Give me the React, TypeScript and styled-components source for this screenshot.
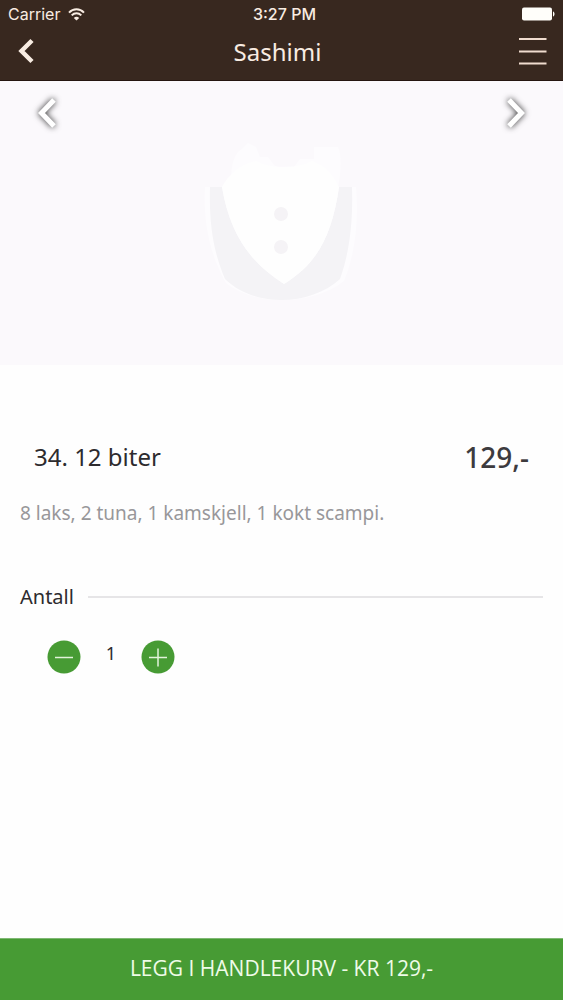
import React, { useState } from "react";
import styled, { createGlobalStyle } from "styled-components";

const GlobalStyle = createGlobalStyle`
  *, *::before, *::after { box-sizing: border-box; }
  body {
    margin: 0;
    background: #fefefe;
    font-family: "Noto Sans", "Open Sans", sans-serif;
    color: #2d2b2e;
  }
  button { font: inherit; color: inherit; border: 0; padding: 0; background: none; cursor: pointer; }
  h1, h2, p { margin: 0; font-weight: 400; }
  svg { display: block; }
`;

const Screen = styled.div`
  display: flex;
  flex-direction: column;
  min-height: 100vh;
`;

const Header = styled.header`
  background: #38281f;
  color: #f8ece2;
  border-bottom: 1px solid #251610;
`;

const StatusBar = styled.div`
  display: grid;
  grid-template-columns: 1fr auto 1fr;
  align-items: center;
  height: 28px;
  padding: 0 8px;
  font-family: Inter, "Liberation Sans", sans-serif;
  font-size: 16px;
  line-height: 28px;
`;

const Carrier = styled.div`
  display: flex;
  align-items: center;
  gap: 8px;
`;

const Clock = styled.time`
  padding-left: 6px;
  font-weight: 500;
`;

const BatterySlot = styled.div`
  justify-self: end;
`;

const NavBar = styled.nav`
  display: grid;
  grid-template-columns: 1fr auto 1fr;
  align-items: center;
  height: 52px;
  padding: 0 16px 6px;
`;

const NavTitle = styled.h1`
  padding: 2px 8px 0 0;
  font-size: 24px;
  line-height: 44px;
`;

const NavButton = styled.button<{ $side: "start" | "end" }>`
  justify-self: ${(p) => p.$side};
`;

const Hero = styled.section`
  display: flex;
  justify-content: space-between;
  align-items: flex-start;
  height: 284px;
  padding: 12px 28px;
  background: #fbf9fc;
`;

const ArrowButton = styled.button`
  filter: drop-shadow(0 0 3px rgba(0, 0, 0, 0.85));
`;

const Emblem = styled.svg`
  margin-top: 46px;
`;

const Details = styled.main`
  flex: 1;
  padding: 72px 20px 24px;
`;

const ItemRow = styled.div`
  display: flex;
  justify-content: space-between;
  align-items: center;
  padding: 0 14px;
  line-height: 40px;
`;

const ItemName = styled.h2`
  font-size: 24px;
`;

const Price = styled.p`
  font-size: 28px;
  font-weight: 500;
  color: #3d3b3e;
`;

const Description = styled.p`
  margin-top: 20px;
  font-size: 19px;
  line-height: 32px;
  color: #98979a;
`;

const Quantity = styled.fieldset`
  min-width: 0;
  margin: 54px 0 0;
  padding: 0;
  border: 0;
`;

const QuantityHeading = styled.div`
  display: flex;
  align-items: center;
  gap: 14px;
  font-size: 20px;
  line-height: 28px;

  &::after {
    content: "";
    flex: 1;
    height: 2px;
    background: #e6e5e7;
  }
`;

const Stepper = styled.div`
  display: flex;
  align-items: center;
  margin-top: 28px;
  padding-left: 26px;
`;

const StepButton = styled.button`
  width: 36px;
  height: 36px;
`;

const Count = styled.output`
  width: 58px;
  padding-bottom: 8px;
  text-align: center;
  font-size: 18px;
  line-height: 28px;
`;

const CartButton = styled.button`
  && {
    height: 62px;
    padding-bottom: 4px;
    border-top: 1px solid #7fb873;
    background: #479b34;
    color: #effbe8;
    font-family: "Open Sans", "Noto Sans", sans-serif;
    font-size: 21px;
    line-height: 56px;
  }
`;

const unitPrice = 129;

function WifiIcon() {
  return (
    <svg width="17" height="13" viewBox="0 0 17 13" fill="none" stroke="currentColor" strokeWidth="2" aria-hidden="true">
      <path d="M1 4.6C5.2.2 11.8.2 16 4.6" />
      <path d="M3.7 7.4c2.8-2.9 6.8-2.9 9.6 0" />
      <path d="M8.5 12.6 5.8 9.9c1.5-1.5 3.9-1.5 5.4 0Z" fill="currentColor" stroke="none" />
    </svg>
  );
}

function BatteryIcon() {
  return (
    <svg width="33" height="14" viewBox="0 0 33 14" fill="#fffefa" role="img" aria-label="Battery full">
      <rect width="30" height="13" y=".5" rx="2" />
      <path d="M31 4.5c2 .5 2 4.5 0 5Z" />
    </svg>
  );
}

function GalleryArrow({ flip = false }: { flip?: boolean }) {
  return (
    <svg width="36" height="40" viewBox="0 0 36 40" fill="none" stroke="#fff" strokeWidth="5" aria-hidden="true">
      <path d={flip ? "M10 7 22.5 20 10 33" : "M26 7 13.5 20 26 33"} />
    </svg>
  );
}

export default function App() {
  const [count, setCount] = useState(1);

  return (
    <>
      <GlobalStyle />
      <Screen>
        <Header>
          <StatusBar>
            <Carrier>
              Carrier <WifiIcon />
            </Carrier>
            <Clock>3:27 PM</Clock>
            <BatterySlot>
              <BatteryIcon />
            </BatterySlot>
          </StatusBar>
          <NavBar>
            <NavButton $side="start" aria-label="Back">
              <svg width="20" height="26" viewBox="0 0 20 26" fill="none" stroke="currentColor" strokeWidth="4.5" aria-hidden="true">
                <path d="M16 2.5 5.5 13 16 23.5" />
              </svg>
            </NavButton>
            <NavTitle>Sashimi</NavTitle>
            <NavButton $side="end" aria-label="Menu">
              <svg width="28" height="28" viewBox="0 0 28 28" stroke="#f0dccf" strokeWidth="2" aria-hidden="true">
                <path d="M0 2h27.5M0 14.5h27.5M0 26.5h27.5" />
              </svg>
            </NavButton>
          </NavBar>
        </Header>

        <Hero>
          <ArrowButton aria-label="Previous">
            <GalleryArrow />
          </ArrowButton>
          <Emblem width="160" height="170" viewBox="0 0 160 170" aria-hidden="true">
            <path
              d="M28 48c2-20 2-32 12-38l6-6 8 4 4 10h8l6 8c6 4 12 0 20 2l6-8h14V8h24c4 8 3 26 0 40h18c3 34-1 68-12 94-30 24-88 26-118 2C8 116 1 84 3 48Z"
              fill="#fdfcfe"
            />
            <path
              d="M8 48h12c8 48 29 76 62 97 34-21 48-49 55-97h13c1 34-2 64-12 92-28 26-84 30-115 0C11 112 7 84 8 48Z"
              fill="#f4f3f6"
            />
            <path d="M20 48c10-18 24-24 34-26 16 8 40 8 56 0 12 4 20 12 27 26-7 48-21 76-55 97C49 124 28 96 20 48Z" fill="#fefefe" />
            <circle cx="79" cy="75" r="7" fill="#f5f3f6" />
            <circle cx="79" cy="108" r="7" fill="#f5f3f6" />
          </Emblem>
          <ArrowButton aria-label="Next">
            <GalleryArrow flip />
          </ArrowButton>
        </Hero>

        <Details>
          <ItemRow>
            <ItemName>34. 12 biter</ItemName>
            <Price>{unitPrice},-</Price>
          </ItemRow>
          <Description>8 laks, 2 tuna, 1 kamskjell, 1 kokt scampi.</Description>

          <Quantity aria-labelledby="quantity-label">
            <QuantityHeading>
              <span id="quantity-label">Antall</span>
            </QuantityHeading>
            <Stepper>
              <StepButton aria-label="Decrease" onClick={() => setCount(Math.max(1, count - 1))}>
                <svg width="36" height="36" viewBox="0 0 36 36" aria-hidden="true">
                  <circle cx="18" cy="18" r="16.5" fill="#479b34" />
                  <path d="M9 18.5h18" stroke="#e2f3da" strokeWidth="1.5" />
                </svg>
              </StepButton>
              <Count>{count}</Count>
              <StepButton aria-label="Increase" onClick={() => setCount(count + 1)}>
                <svg width="36" height="36" viewBox="0 0 36 36" aria-hidden="true">
                  <circle cx="18" cy="18" r="16.5" fill="#479b34" />
                  <path d="M9 18.5h18M18 9.5v18" stroke="#e2f3da" strokeWidth="1.5" />
                </svg>
              </StepButton>
            </Stepper>
          </Quantity>
        </Details>

        <CartButton>LEGG I HANDLEKURV - KR {unitPrice * count},-</CartButton>
      </Screen>
    </>
  );
}
